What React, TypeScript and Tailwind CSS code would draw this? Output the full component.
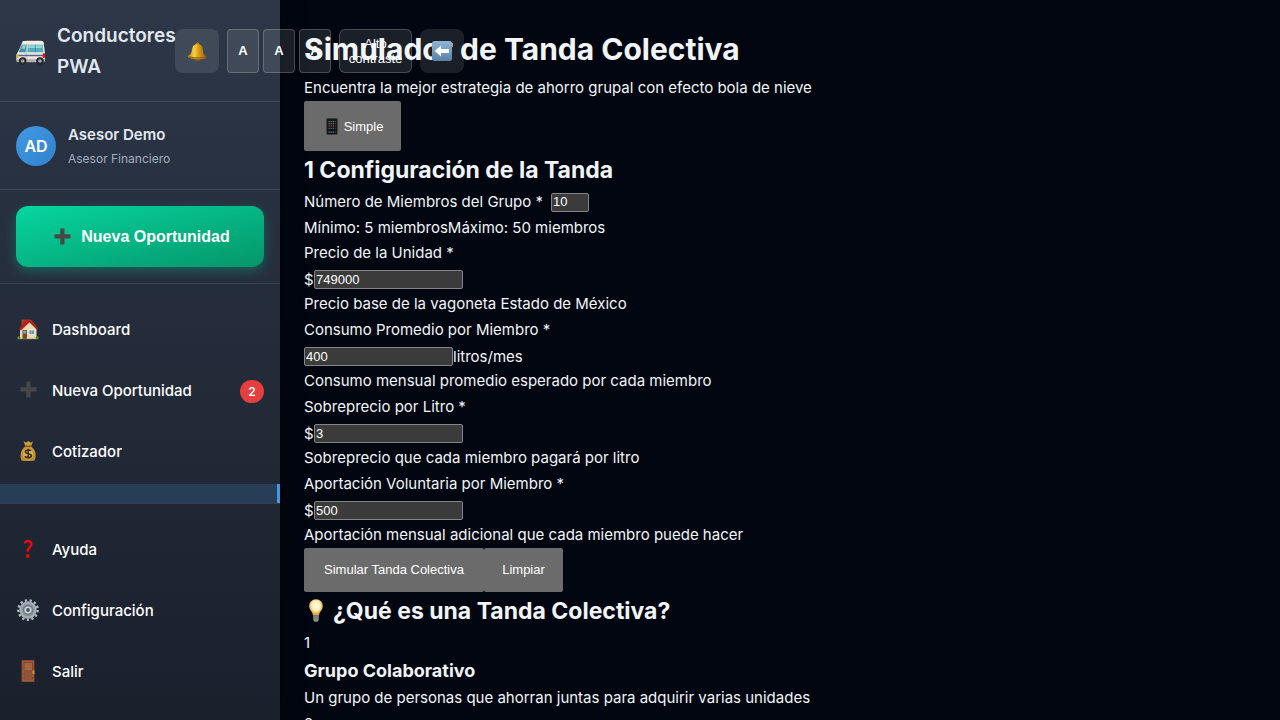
import type { ReactNode } from 'react';

function Van() {
  return (
    <svg viewBox="48 108 90 90" className="h-[30px] w-[30px] shrink-0" aria-hidden="true">
      <path d="M68 124q3-2 12-2h42q8 0 9 5l4 34v18q0 6-6 6H56q-7 0-7-7v-14l9-16z" fill="#ebe7da" />
      <path d="M66 131q2-8 13-8h43q7 0 9 7z" fill="#f3efe4" />
      <path d="M66 134h14l-3 23H56z" fill="#3f93a8" />
      <path d="M69 136h8l-2 10H64z" fill="#8ed0da" />
      <path d="M84 134h44l2 23H82z" fill="#52aebe" />
      <path d="M85 136h41l1 8H84z" fill="#8fd6dc" />
      <path d="M106 134v23" stroke="#3d7f90" strokeWidth="2" />
      <path d="M81 131l-4 52" stroke="#a5a196" strokeWidth="2" />
      <path d="M52 164h82v5H51z" fill="#5a63a6" />
      <path d="M49 177h86v6q-1 4-6 4H56q-7 0-7-5z" fill="#b5b3ad" />
      <path d="M51 164h5l-1 10h-6z" fill="#f2a71f" />
      <rect x="128" y="160" width="7" height="14" rx="2" fill="#de1b22" />
      <circle cx="68" cy="183" r="11.500" fill="#26282c" />
      <circle cx="68" cy="183" r="5.500" fill="#a4a8ae" />
      <circle cx="120" cy="183" r="11.500" fill="#26282c" />
      <circle cx="120" cy="183" r="5.500" fill="#a4a8ae" />
    </svg>
  );
}

function Bell() {
  return (
    <svg viewBox="0 0 20 20" className="h-5 w-5" aria-hidden="true">
      <defs>
        <linearGradient id="bell" x1="0" x2="1">
          <stop offset="0" stopColor="#b57a0d" />
          <stop offset=".35" stopColor="#f7d040" />
          <stop offset=".65" stopColor="#cf9010" />
          <stop offset="1" stopColor="#9c5f08" />
        </linearGradient>
      </defs>
      <circle cx="10.500" cy="2.800" r="1.400" fill="#c98f15" />
      <ellipse cx="10.500" cy="18.300" rx="3" ry="1.600" fill="#8f5a0a" />
      <path d="M10.500 2.900c3.500 0 5 2.300 5.300 5.500.2 3.500.8 5.200 3.500 7.500.4 1.200-1.500 1.800-3.500 2-4 .5-9 .2-13-.8-2-.5-2.600-1.400-1.800-2 3-1.800 3.600-3.500 4-6.500.5-3.500 2.200-5.700 5.500-5.700z" fill="url(#bell)" />
      <path d="M2 15.800c5 1.300 11 1.600 16 .8" stroke="#8a5808" strokeWidth="1" fill="none" />
    </svg>
  );
}

function BackArrow() {
  return (
    <svg viewBox="0 0 20 20" className="h-5 w-5" aria-hidden="true">
      <defs>
        <linearGradient id="back" x1="0" y1="0" x2="0" y2="1">
          <stop offset="0" stopColor="#8fb6d6" />
          <stop offset="1" stopColor="#5a82a6" />
        </linearGradient>
      </defs>
      <rect width="20" height="20" rx="2.500" fill="url(#back)" />
      <path d="M2.700 10l6.300-5.600v3.700h8v3.800H9v3.700z" fill="#fff" />
    </svg>
  );
}

function Plus() {
  return (
    <svg viewBox="0 0 17 17" className="h-[17px] w-[17px] shrink-0" aria-hidden="true">
      <path d="M6.300.5h4.200v5.800h6v4.200h-6v6H6.300v-6H.5V6.300h5.800z" fill="#474747" />
    </svg>
  );
}

function House() {
  return (
    <svg viewBox="0 0 22 22" className="h-[22px] w-[22px]" aria-hidden="true">
      <path d="M.5 19.500h21v1.800H.5z" fill="#5c8f2f" />
      <path d="M4.500 1.500h3v5h-3z" fill="#a93f2c" />
      <path d="M3 10.500l8.500-7.500 8 7.500v10.300H3z" fill="#ecd9b4" />
      <path d="M7.500 1.500h6.500l7 8.800-1.300 1.200-7.200-7-8.500 8-1.700-1.200z" fill="#ba2a22" />
      <path d="M1.800 11.300L12.400 3l8 8" stroke="#831b19" fill="none" strokeWidth=".9" />
      <rect x="5.500" y="12" width="4.500" height="8.800" fill="#7b4426" />
      <rect x="6.200" y="12.700" width="3" height="3" fill="#65a8c8" />
      <rect x="12" y="12" width="5.300" height="4.500" fill="#4c93c1" stroke="#fff2d5" strokeWidth=".8" />
      <path d="M14.600 12v4.500" stroke="#d7e6e8" strokeWidth=".5" />
      <circle cx="2" cy="19.500" r="1.500" fill="#548a30" />
      <circle cx="20.200" cy="19.500" r="1.500" fill="#548a30" />
    </svg>
  );
}

function MoneyBag() {
  return (
    <svg viewBox="0 0 22 22" className="h-[22px] w-[22px]" aria-hidden="true">
      <defs>
        <radialGradient id="bag">
          <stop offset="0" stopColor="#f2d36a" />
          <stop offset="1" stopColor="#b9872b" />
        </radialGradient>
      </defs>
      <path d="M6.500 1.300l2.600 1.300L11.500 1l2 1.500 2.500-1-2 5H8.500z" fill="#c9993c" />
      <path d="M8.500 6h5.400c3.500 2.800 5 6 4.800 10-.1 3.500-1 5-3 5H6.500c-2.300 0-3-1.700-3-4.700C3.500 12 5 8.800 8.500 6z" fill="url(#bag)" />
      <path d="M8 6.300h6.500" stroke="#7c5412" strokeWidth="1.300" />
      <path d="M14 10.800c-1-1.100-5.600-1.400-5.600 1 0 2.700 5.900 1.300 5.900 4 0 2.500-5 2.200-6.400.6M11.200 8.800v9.800" stroke="#38301c" strokeWidth="1.600" fill="none" />
    </svg>
  );
}

function Question() {
  return (
    <svg viewBox="0 0 22 22" className="h-[22px] w-[22px]" aria-hidden="true">
      <path d="M8 4.500c1.200-2.300 6.300-2.300 6.300 1.400 0 3.300-3.300 3.600-3.500 6.800" stroke="#ea0606" strokeWidth="2.500" strokeLinecap="round" fill="none" />
      <circle cx="10.700" cy="18" r="1.900" fill="#ea0606" />
    </svg>
  );
}

function Gear() {
  return (
    <svg viewBox="0 0 22 22" className="h-[22px] w-[22px]" aria-hidden="true">
      <circle cx="11" cy="11" r="9.700" fill="none" stroke="#b3bcc4" strokeWidth="2.400" strokeDasharray="2.345 2.345" />
      <circle cx="11" cy="11" r="8.700" fill="#a3adb6" />
      <circle cx="11" cy="11" r="6.300" fill="#87929c" />
      <circle cx="11" cy="11" r="5" fill="#6f7a85" />
      <circle cx="11" cy="11" r="3.600" fill="#d0d7dc" />
      <circle cx="11" cy="11" r="1.900" fill="#4a5561" />
    </svg>
  );
}

function Door() {
  return (
    <svg viewBox="0 0 22 22" className="h-[22px] w-[22px]" aria-hidden="true">
      <rect x="4.500" y="0" width="13" height="22" fill="#7e432a" />
      <rect x="5.300" y=".8" width="11.400" height="20.600" fill="#a25d3d" />
      <path d="M7 2.500h8.500V11H7zM7 13h8.500v2H7zM7 17h8.500v2H7z" fill="#a96443" stroke="#74402a" strokeWidth=".8" />
      <rect x="15.300" y="10.300" width="2.200" height="4" rx=".6" fill="#bd922b" />
    </svg>
  );
}

function Phone() {
  return (
    <svg viewBox="0 0 12 17" className="h-[17px] w-3" aria-hidden="true">
      <rect x=".7" y=".5" width="10.600" height="16" rx="1" fill="#151515" stroke="#3c3c3c" strokeWidth=".8" />
      <path d="M2.500 3.500h7" stroke="#4a94a8" strokeDasharray="1.300 .8" />
      <path d="M2.500 5.700h7" stroke="#5fa856" strokeDasharray="1.300 .8" />
      <path d="M2.500 8h7" stroke="#b84a62" strokeDasharray="1.300 .8" />
      <path d="M2.500 10.300h7" stroke="#5468bd" strokeDasharray="1.300 .8" />
      <path d="M2.500 14h7" stroke="#5b9c6e" strokeDasharray="1.300 .8" />
    </svg>
  );
}

function Bulb() {
  return (
    <svg viewBox="0 0 24 24" className="h-6 w-6 shrink-0" aria-hidden="true">
      <defs>
        <radialGradient id="bulb" cy=".4">
          <stop offset="0" stopColor="#fffef0" />
          <stop offset=".6" stopColor="#fff0b4" />
          <stop offset="1" stopColor="#dda94e" />
        </radialGradient>
      </defs>
      <path d="M12 .3c4.200 0 6.800 3 6.800 6.700 0 4.300-3.300 5.200-3.800 9.500H9c-.5-4.300-3.800-5.200-3.800-9.500C5.200 3.300 7.800.3 12 .3z" fill="url(#bulb)" />
      <path d="M9.200 16.500h5.600v4.500l-1.500 1.700h-2.600L9.200 21z" fill="#96928a" />
      <path d="M9.200 18h5.600M9.200 19.900h5.600" stroke="#666" strokeWidth=".8" />
    </svg>
  );
}

function NavItem({ icon, label, badge }: { icon: ReactNode; label: string; badge?: string }) {
  return (
    <li>
      <a href="#" className="flex h-[57px] items-center gap-3 px-4 pt-0.5 text-[15px] font-medium text-white">
        <span className="flex w-6 justify-center pb-1">{icon}</span>
        <span className="flex-1">{label}</span>
        {badge && (
          <span className="flex h-[23px] w-6 items-center justify-center rounded-full bg-[#e53e3e] text-xs font-semibold">
            {badge}
          </span>
        )}
      </a>
    </li>
  );
}

const headerButton = 'flex h-11 shrink-0 items-center justify-center bg-white/10 font-[Liberation_Sans,sans-serif] text-[13px] text-white';

function Sidebar() {
  return (
    <aside className="relative z-10 flex h-screen w-[280px] shrink-0 flex-col bg-linear-to-b from-[#2d3748] to-[#1a202c] shadow-[4px_0_20px_rgba(0,0,0,0.3)]">
      <header className="flex items-center border-b border-white/10 px-4 pt-5 pb-[19px]">
        <div className="flex items-center gap-[11px]">
          <Van />
          <span className="w-[118px] text-[19px] leading-[31px] font-semibold text-[#e2e8f0]">Conductores PWA</span>
        </div>
        <div className="flex items-center gap-2">
          <button type="button" aria-label="Notificaciones" className={`${headerButton} w-11 rounded-lg`}>
            <Bell />
          </button>
          <div className="flex gap-1">
            {['Texto pequeño', 'Texto normal', 'Texto grande'].map((name) => (
              <button key={name} type="button" aria-label={name} className={`${headerButton} w-8 rounded-sm border border-white/20 font-bold`}>
                A
              </button>
            ))}
          </div>
          <button type="button" className={`${headerButton} w-[73px] rounded-md border border-white/20 leading-[15px]`}>
            Alto contraste
          </button>
          <button type="button" aria-label="Contraer menú" className={`${headerButton} w-11 rounded-lg`}>
            <BackArrow />
          </button>
        </div>
      </header>

      <div className="flex h-[88px] shrink-0 items-center gap-3 border-b border-white/10 px-4">
        <div className="flex h-10 w-10 items-center justify-center rounded-full bg-linear-to-br from-[#4299e1] to-[#3182ce] font-semibold text-white">
          AD
        </div>
        <div className="pt-0.5">
          <div className="text-[15px] leading-6 font-semibold text-[#e2e8f0]">Asesor Demo</div>
          <div className="text-xs leading-6 text-[#a0aec0]">Asesor Financiero</div>
        </div>
      </div>

      <div className="border-b border-white/10 p-4">
        <button
          type="button"
          className="flex h-[61px] w-full items-center justify-center gap-[10px] rounded-xl bg-linear-to-br from-[#06d6a0] to-[#059669] pl-1 font-[Liberation_Sans,sans-serif] text-base font-bold text-white shadow-[0_4px_12px_rgba(6,214,160,0.3)]"
        >
          <Plus />
          Nueva Oportunidad
        </button>
      </div>

      <nav className="flex flex-col pt-[17px]" aria-label="Principal">
        <ul className="flex flex-col gap-1">
          <NavItem icon={<House />} label="Dashboard" />
          <NavItem icon={<Plus />} label="Nueva Oportunidad" badge="2" />
          <NavItem icon={<MoneyBag />} label="Cotizador" />
          <li className="h-[19px] border-r-3 border-[#4299e1] bg-[#4299e1]/20" />
        </ul>
      </nav>
      <nav className="border-t border-white/10 pt-[17px]" aria-label="Cuenta">
        <ul className="flex flex-col gap-1">
          <NavItem icon={<Question />} label="Ayuda" />
          <NavItem icon={<Gear />} label="Configuración" />
          <NavItem icon={<Door />} label="Salir" />
        </ul>
      </nav>
    </aside>
  );
}

const inputStyle = 'h-[19px] rounded-xs border border-[#858585] bg-[#3b3b3b] px-px font-[Liberation_Sans,sans-serif] text-[13px] text-white';
const buttonStyle = 'flex items-center justify-center rounded-xs bg-[#6b6b6b] font-[Liberation_Sans,sans-serif] text-[13px] text-white';

type FieldProps = { id: string; label: string; value: string; help: string; prefix?: string; suffix?: string };

function Field({ id, label, value, help, prefix, suffix }: FieldProps) {
  return (
    <div>
      <label htmlFor={id} className="block">{label}</label>
      <div className="flex h-[25px] items-center pt-0.5">
        {prefix && <span className="w-[10px]">{prefix}</span>}
        <input id={id} defaultValue={value} className={`${inputStyle} w-[149px]`} />
        {suffix && <span>{suffix}</span>}
      </div>
      <p>{help}</p>
    </div>
  );
}

export default function App() {
  return (
    <div className="flex h-screen overflow-hidden bg-[#020610] font-[Inter,sans-serif] text-base text-[#f1f5f9]">
      <Sidebar />
      <main className="min-w-0 flex-1 p-6 text-[15px] leading-[26px]">
        <h1 className="text-[30px] leading-[51px] font-bold">Simulador de Tanda Colectiva</h1>
        <p>Encuentra la mejor estrategia de ahorro grupal con efecto bola de nieve</p>
        <button type="button" className={`${buttonStyle} h-[50px] w-[97px] gap-1.5 pl-1`}>
          <Phone />
          <span className="pt-0.5">Simple</span>
        </button>

        <form onSubmit={(event) => event.preventDefault()}>
          <h2 className="text-[23px] leading-[38px] font-bold">1 Configuración de la Tanda</h2>
          <div className="flex items-center gap-2">
            <label htmlFor="members">Número de Miembros del Grupo *</label>
            <input id="members" defaultValue="10" className={`${inputStyle} w-[38px]`} />
          </div>
          <div className="flex leading-[25px]">
            <span>Mínimo: 5 miembros</span>
            <span>Máximo: 50 miembros</span>
          </div>
          <Field id="price" label="Precio de la Unidad *" prefix="$" value="749000" help="Precio base de la vagoneta Estado de México" />
          <Field id="usage" label="Consumo Promedio por Miembro *" suffix="litros/mes" value="400" help="Consumo mensual promedio esperado por cada miembro" />
          <Field id="surcharge" label="Sobreprecio por Litro *" prefix="$" value="3" help="Sobreprecio que cada miembro pagará por litro" />
          <Field id="voluntary" label="Aportación Voluntaria por Miembro *" prefix="$" value="500" help="Aportación mensual adicional que cada miembro puede hacer" />
          <div className="flex">
            <button type="submit" className={`${buttonStyle} h-11 w-[180px]`}>Simular Tanda Colectiva</button>
            <button type="reset" className={`${buttonStyle} h-11 w-[79px]`}>Limpiar</button>
          </div>
        </form>

        <section>
          <h2 className="flex items-center gap-[5px] text-[23px] leading-[38px] font-bold">
            <Bulb />
            ¿Qué es una Tanda Colectiva?
          </h2>
          <div>1</div>
          <h3 className="text-lg leading-[29px] font-bold">Grupo Colaborativo</h3>
          <p>Un grupo de personas que ahorran juntas para adquirir varias unidades</p>
          <div>2</div>
        </section>
      </main>
    </div>
  );
}
